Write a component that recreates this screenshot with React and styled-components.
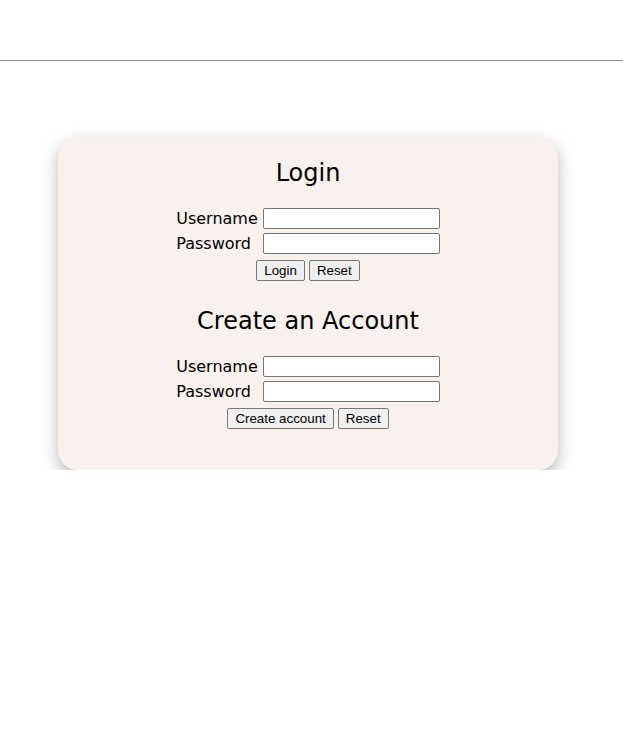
import styled, { createGlobalStyle } from 'styled-components';

const GlobalStyle = createGlobalStyle`
  body {
    margin: 0;
    background: #ffffff;
    font-family: "DejaVu Sans", "Liberation Sans", sans-serif;
  }
`;

const Header = styled.header`
  height: 60px;
`;

const Divider = styled.hr`
  margin: 0;
  border: none;
  border-top: 1px solid #9a9a9a;
  border-bottom: 1px solid #eeeeee;
`;

const Card = styled.main`
  width: 500px;
  margin: 75px 0 0 58px;
  padding: 22px 0 41px;
  box-sizing: border-box;
  background: #f9f1ee;
  border-radius: 20px;
  box-shadow: 0 6px 16px rgba(0, 0, 0, 0.28);
  display: flex;
  flex-direction: column;
  align-items: center;
`;

const Section = styled.form`
  display: flex;
  flex-direction: column;
  align-items: center;
  margin-top: ${props => props.$first ? '0' : '26px'};
`;

const Title = styled.h2`
  margin: 0 0 21px;
  font-size: 24px;
  line-height: 28px;
  font-weight: 400;
  color: #000;
`;

const Fields = styled.div`
  display: grid;
  grid-template-columns: auto auto;
  column-gap: 5px;
  row-gap: 4px;
  align-items: center;
`;

const Label = styled.label`
  font-size: 16px;
  line-height: 19px;
  color: #000;
`;

const Input = styled.input`
  width: 177px;
  height: 21px;
  box-sizing: border-box;
  margin: 0;
  padding: 1px 2px;
  border: 1px solid #767676;
  border-radius: 2px;
  background: #fff;
  font-family: "Liberation Sans", Arial, sans-serif;
  font-size: 13.33px;
`;

const Actions = styled.div`
  display: flex;
  gap: 4px;
  margin-top: 6px;
`;

const Button = styled.button`
  height: 21px;
  margin: 0;
  padding: 1px 7px;
  border: 1px solid #767676;
  border-radius: 2px;
  background: #efefef;
  color: #000;
  font-family: "Liberation Sans", Arial, sans-serif;
  font-size: 13.33px;
  line-height: 15px;
`;

function AccountForm({ title, submitLabel, first }) {
  return (
    <Section $first={first} onSubmit={e => e.preventDefault()}>
      <Title>{title}</Title>
      <Fields>
        <Label>Username</Label>
        <Input type="text" />
        <Label>Password</Label>
        <Input type="password" />
      </Fields>
      <Actions>
        <Button type="submit">{submitLabel}</Button>
        <Button type="reset">Reset</Button>
      </Actions>
    </Section>
  );
}

export default function App() {
  return (
    <>
      <GlobalStyle />
      <Header />
      <Divider />
      <Card>
        <AccountForm first title="Login" submitLabel="Login" />
        <AccountForm title="Create an Account" submitLabel="Create account" />
      </Card>
    </>
  );
}
